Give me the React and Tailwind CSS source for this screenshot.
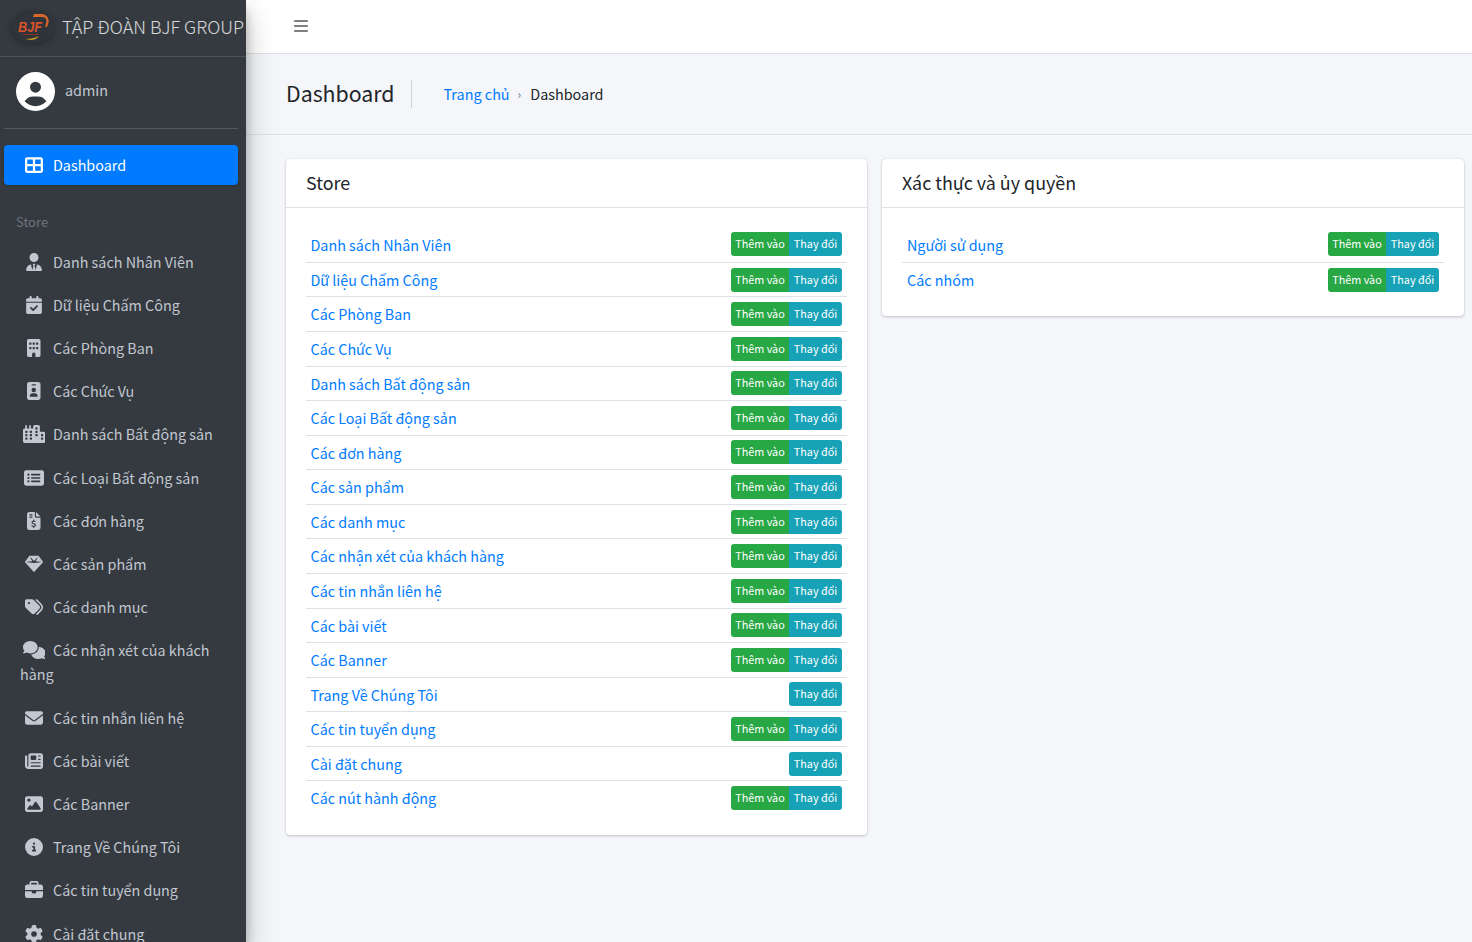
import React from "react";
import {
  FaBars,
  FaBriefcase,
  FaBuilding,
  FaCalendarCheck,
  FaCircleInfo,
  FaCircleUser,
  FaCity,
  FaComments,
  FaEnvelope,
  FaFileInvoiceDollar,
  FaGear,
  FaGem,
  FaIdBadge,
  FaImage,
  FaNewspaper,
  FaRectangleList,
  FaTableCellsLarge,
  FaTags,
  FaUserTie,
} from "react-icons/fa6";

const font = { fontFamily: '"Noto Sans CJK SC", "Noto Sans", sans-serif' };

const menu = [
  [FaUserTie, "w-[16px]", "Danh sách Nhân Viên"],
  [FaCalendarCheck, "w-[16px]", "Dữ liệu Chấm Công"],
  [FaBuilding, "w-[13.5px]", "Các Phòng Ban"],
  [FaIdBadge, "w-[13.5px]", "Các Chức Vụ"],
  [FaCity, "w-[22.5px]", "Danh sách Bất động sản"],
  [FaRectangleList, "w-[20px]", "Các Loại Bất động sản"],
  [FaFileInvoiceDollar, "w-[13.5px]", "Các đơn hàng"],
  [FaGem, "w-[18px]", "Các sản phẩm"],
  [FaTags, "w-[18px]", "Các danh mục"],
  [FaComments, "w-[22.5px]", "Các nhận xét của khách hàng"],
  [FaEnvelope, "w-[18px]", "Các tin nhắn liên hệ"],
  [FaNewspaper, "w-[18px]", "Các bài viết"],
  [FaImage, "w-[18px]", "Các Banner"],
  [FaCircleInfo, "w-[18px]", "Trang Về Chúng Tôi"],
  [FaBriefcase, "w-[18px]", "Các tin tuyển dụng"],
  [FaGear, "w-[18px]", "Cài đặt chung"],
];

const storeRows = [
  ["Danh sách Nhân Viên", true],
  ["Dữ liệu Chấm Công", true],
  ["Các Phòng Ban", true],
  ["Các Chức Vụ", true],
  ["Danh sách Bất động sản", true],
  ["Các Loại Bất động sản", true],
  ["Các đơn hàng", true],
  ["Các sản phẩm", true],
  ["Các danh mục", true],
  ["Các nhận xét của khách hàng", true],
  ["Các tin nhắn liên hệ", true],
  ["Các bài viết", true],
  ["Các Banner", true],
  ["Trang Về Chúng Tôi", false],
  ["Các tin tuyển dụng", true],
  ["Cài đặt chung", false],
  ["Các nút hành động", true],
];

const authRows = [
  ["Người sử dụng", true],
  ["Các nhóm", true],
];

function Logo() {
  return (
    <div className="w-[43px] h-[33px] mt-[-3px] rounded-[50%] bg-[#2f343a] shadow-[0_2px_6px_rgba(0,0,0,0.3)] shrink-0 overflow-hidden">
      <svg viewBox="0 0 43 33" className="w-full h-full">
        <path d="M23 4 h8 a7 7 0 0 1 6 10 l-1 3 l-2 0 l1 -4 a4 4 0 0 0 -4 -6 h-9 z" fill="#d9662a" />
        <text x="7" y="22" fontSize="15" textLength="24" lengthAdjust="spacingAndGlyphs" fontStyle="italic" fontWeight="700" fill="#d9522a" fontFamily="Liberation Sans">BJF</text>
        <path d="M12 24 h16 l-1 1 h-16 z" fill="#8a3020" />
        <path d="M14 29 q8 0 14 -3 q-3 4 -8 4 z" fill="#c99a20" />
      </svg>
    </div>
  );
}

function MenuItem({ icon: Icon, width, label }) {
  return (
    <a className="block ml-1 mr-2 mb-[3.2px] px-4 py-2 leading-6 text-[#c2c7d0] text-[14.35px]">
      <span className="inline-flex justify-center w-[28px] mr-[5px] align-[-3px]">
        <Icon className={`h-[18px] ${width}`} />
      </span>
      {label}
    </a>
  );
}

function Sidebar() {
  return (
    <aside className="w-[246px] h-[942px] shrink-0 overflow-hidden bg-[#343a40] relative z-10 shadow-[0_14px_28px_rgba(0,0,0,0.25),0_10px_10px_rgba(0,0,0,0.22)]">
      <div className="h-[57px] flex items-center pl-[11px] border-b border-[#4b545c]">
        <Logo />
        <span className="ml-2 mb-[3px] text-[18px] font-light text-white/80 whitespace-nowrap">TẬP ĐOÀN BJF GROUP</span>
      </div>
      <div className="ml-1 mr-2 h-[72px] flex items-center pl-3 pb-[3px] border-b border-[#4f5962]">
        <FaCircleUser className="w-[39px] h-[39px] text-white" />
        <span className="ml-[10px] mb-[2px] text-[#c2c7d0] text-[14.4px]">admin</span>
      </div>
      <nav className="mt-4">
        <a className="flex items-center ml-1 mr-2 h-10 pl-[21px] rounded bg-[#007bff] text-white text-[14.35px] shadow-sm">
          <FaTableCellsLarge className="w-[18px] h-[18px] mr-2.5" />
          Dashboard
        </a>
        <div className="ml-1 mr-2 px-3 pt-[25px] leading-[24px] text-[13px] text-[#6c757d] h-[56.7px]">Store</div>
        {menu.map(([icon, width, label]) => (
          <MenuItem key={label} icon={icon} width={width} label={label} />
        ))}
      </nav>
    </aside>
  );
}

function RowButtons({ canAdd }) {
  return (
    <div className="inline-flex h-6 text-[10.8px] text-white rounded-[3px] overflow-hidden leading-[23px]">
      {canAdd && <span className="bg-[#28a745] w-[58px] text-center">Thêm vào</span>}
      <span className="bg-[#17a2b8] w-[53px] text-center">Thay đổi</span>
    </div>
  );
}

function ModelCard({ title, rows, indent }) {
  return (
    <section className="bg-white rounded self-start shadow-[0_0_1px_rgba(0,0,0,0.13),0_1px_3px_rgba(0,0,0,0.2)]">
      <h3 className="h-[49px] flex items-center px-5 pb-[2px] text-[17.9px] text-[#212529] border-b border-[#dee2e6]">{title}</h3>
      <div className="px-5 pt-[19.2px] pb-5">
        {rows.map(([name, canAdd], i) => (
          <div
            key={name}
            className={`h-[34.59px] flex items-center justify-between pr-[5px] ${indent} ${i > 0 ? "border-t border-[#dee2e6]" : ""}`}
          >
            <a className="text-[14.35px] text-[#007bff]">{name}</a>
            <RowButtons canAdd={canAdd} />
          </div>
        ))}
      </div>
    </section>
  );
}

export default function App() {
  return (
    <div className="flex h-[942px] w-full overflow-hidden bg-[#f4f6f9]" style={font}>
      <Sidebar />
      <main className="flex-1 min-w-0">
        <header className="h-[54px] bg-white border-b border-[#dee2e6] flex items-center pl-[48px] pb-[2px]">
          <FaBars className="h-4 w-[14px] text-[#7f7f7f]" />
        </header>
        <div className="h-[81px] border-b border-[#dee2e6] flex items-center pl-10">
          <h1 className="text-[21.3px] text-[#212529] pr-4 h-7 leading-[26px] border-r border-[#ced4da]">Dashboard</h1>
          <div className="ml-8 text-[14.4px] flex items-center">
            <a className="text-[#007bff]">Trang chủ</a>
            <span className="ml-2 mr-[9px] text-xs text-[#6c757d]">›</span>
            <span className="text-[#212529]">Dashboard</span>
          </div>
        </div>
        <div className="grid grid-cols-[581px_582px] gap-[15px] pl-10 pt-6">
          <ModelCard title="Store" rows={storeRows} indent="pl-[4.5px]" />
          <ModelCard title="Xác thực và ủy quyền" rows={authRows} indent="pl-[5px]" />
        </div>
      </main>
    </div>
  );
}
